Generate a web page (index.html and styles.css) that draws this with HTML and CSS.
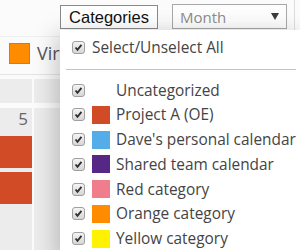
FILE: index.html
```html
<!DOCTYPE html>
<html>
<head>
<meta charset="utf-8">
<link rel="stylesheet" href="styles.css">
</head>
<body>
<div class="page">
  <div class="toolbar">
    <button class="cat-btn">Categories</button>
    <div class="view-select">
      <span>Month</span>
      <svg class="arrow" width="8" height="7" viewBox="0 0 8 7"><path d="M0 0 H8 L4 7 Z" fill="#3a3a3a"/></svg>
    </div>
    <div class="divider"></div>
  </div>
  <div class="legend">
    <span class="legend-swatch"></span>
    <span class="legend-text">Virtual</span>
  </div>
  <div class="calendar">
    <div class="cell"></div>
    <div class="cell"></div>
    <div class="cell day">
      <span class="day-num">5</span>
      <div class="event"></div>
      <div class="event"></div>
    </div>
    <div class="cell"></div>
  </div>

  <div class="dropdown">
    <label class="row">
      <span class="check"><svg width="13" height="13" viewBox="0 0 13 13"><path d="M3 6.5 L5.3 9.2 L10 3.5" fill="none" stroke="#2e2e2e" stroke-width="2.2"/></svg></span>
      <span class="label">Select/Unselect All</span>
    </label>
    <div class="sep"></div>
    <label class="row">
      <span class="check"><svg width="13" height="13" viewBox="0 0 13 13"><path d="M3 6.5 L5.3 9.2 L10 3.5" fill="none" stroke="#2e2e2e" stroke-width="2.2"/></svg></span>
      <span class="swatch none"></span>
      <span class="label">Uncategorized</span>
    </label>
    <label class="row">
      <span class="check"><svg width="13" height="13" viewBox="0 0 13 13"><path d="M3 6.5 L5.3 9.2 L10 3.5" fill="none" stroke="#2e2e2e" stroke-width="2.2"/></svg></span>
      <span class="swatch c-proj"></span>
      <span class="label">Project A (OE)</span>
    </label>
    <label class="row">
      <span class="check"><svg width="13" height="13" viewBox="0 0 13 13"><path d="M3 6.5 L5.3 9.2 L10 3.5" fill="none" stroke="#2e2e2e" stroke-width="2.2"/></svg></span>
      <span class="swatch c-dave"></span>
      <span class="label">Dave's personal calendar</span>
    </label>
    <label class="row">
      <span class="check"><svg width="13" height="13" viewBox="0 0 13 13"><path d="M3 6.5 L5.3 9.2 L10 3.5" fill="none" stroke="#2e2e2e" stroke-width="2.2"/></svg></span>
      <span class="swatch c-shared"></span>
      <span class="label">Shared team calendar</span>
    </label>
    <label class="row">
      <span class="check"><svg width="13" height="13" viewBox="0 0 13 13"><path d="M3 6.5 L5.3 9.2 L10 3.5" fill="none" stroke="#2e2e2e" stroke-width="2.2"/></svg></span>
      <span class="swatch c-red"></span>
      <span class="label">Red category</span>
    </label>
    <label class="row">
      <span class="check"><svg width="13" height="13" viewBox="0 0 13 13"><path d="M3 6.5 L5.3 9.2 L10 3.5" fill="none" stroke="#2e2e2e" stroke-width="2.2"/></svg></span>
      <span class="swatch c-orange"></span>
      <span class="label">Orange category</span>
    </label>
    <label class="row">
      <span class="check"><svg width="13" height="13" viewBox="0 0 13 13"><path d="M3 6.5 L5.3 9.2 L10 3.5" fill="none" stroke="#2e2e2e" stroke-width="2.2"/></svg></span>
      <span class="swatch c-yellow"></span>
      <span class="label">Yellow category</span>
    </label>
  </div>
</div>
</body>
</html>
```

FILE: styles.css
```css
* { box-sizing: border-box; }
html, body {
  margin: 0;
  padding: 0;
}
body {
  width: 300px;
  height: 250px;
  overflow: hidden;
  background: #fbfbfb;
  font-family: "Open Sans", "Liberation Sans", sans-serif;
}
.page {
  position: relative;
  width: 300px;
  height: 250px;
  overflow: hidden;
}
.toolbar {
  display: flex;
  align-items: flex-start;
  height: 37px;
  padding: 5px 0 0 60px;
  border-bottom: 1px solid #efefef;
}
.cat-btn {
  width: 98px;
  height: 24px;
  margin: 0;
  padding: 0;
  border: 1px solid #8a8a8a;
  background: #fff;
  font-family: "Liberation Sans", Arial, sans-serif;
  font-size: 16.5px;
  color: #111;
  line-height: 22px;
  text-align: center;
}
.view-select {
  display: flex;
  align-items: center;
  justify-content: space-between;
  width: 115px;
  height: 25px;
  margin: -1px 0 0 14px;
  padding: 0 7px 0 7px;
  border: 1px solid #a8a8a8;
  background: #fdfdfd;
  font-size: 15px;
  color: #8c8c8c;
}
.divider {
  width: 1px;
  height: 30px;
  margin: -5px 0 0 7px;
  background: #dcdcdc;
}
.legend {
  display: flex;
  align-items: center;
  gap: 7px;
  height: 38px;
  padding: 0 0 5px 9px;
  border-bottom: 1px solid #e4e4e4;
}
.legend-swatch {
  width: 21px;
  height: 21px;
  background: #ff8c00;
  border: 1px solid #8a8a8a;
}
.legend-text {
  font-size: 18px;
  color: #555;
}
.calendar {
  display: grid;
  grid-template-columns: 32px 60px;
  grid-template-rows: 24px 150px;
  column-gap: 2px;
  row-gap: 5px;
  margin-top: 4px;
}
.cell {
  background: #ececec;
}
.day {
  display: flex;
  flex-direction: column;
  align-items: stretch;
}
.day-num {
  align-self: flex-end;
  padding: 0 4px 0 0;
  font-size: 17px;
  line-height: 22px;
  color: #666;
  height: 28px;
}
.event {
  height: 32px;
  margin-bottom: 4px;
  background: #d14b27;
}
.dropdown {
  position: absolute;
  left: 60px;
  top: 30px;
  width: 242px;
  height: 230px;
  padding-top: 5px;
  background: #fff;
  box-shadow: -4px 4px 22px rgba(0, 0, 0, 0.22);
}
.row {
  display: flex;
  align-items: center;
  height: 24.75px;
  padding-left: 12px;
  font-size: 15.4px;
  color: #444;
  white-space: nowrap;
}
.check {
  display: flex;
  align-items: center;
  justify-content: center;
  width: 13px;
  height: 13px;
  margin-right: 7px;
  border: 1px solid #a0a0a0;
  border-radius: 3px;
  background: linear-gradient(#f4f4f4, #d6d6d6);
  flex: none;
}
.check svg { display: block; }
.swatch {
  width: 18px;
  height: 18px;
  margin-right: 6px;
  flex: none;
}
.sep {
  height: 1px;
  margin: 9px 6px 8px 6px;
  background: #c4c4c4;
}
.none { background: transparent; }
.c-proj { background: #d14b27; }
.c-dave { background: #54ade8; }
.c-shared { background: #562785; }
.c-red { background: #f07d8b; }
.c-orange { background: #ff8c00; }
.c-yellow { background: #fff200; }
```
